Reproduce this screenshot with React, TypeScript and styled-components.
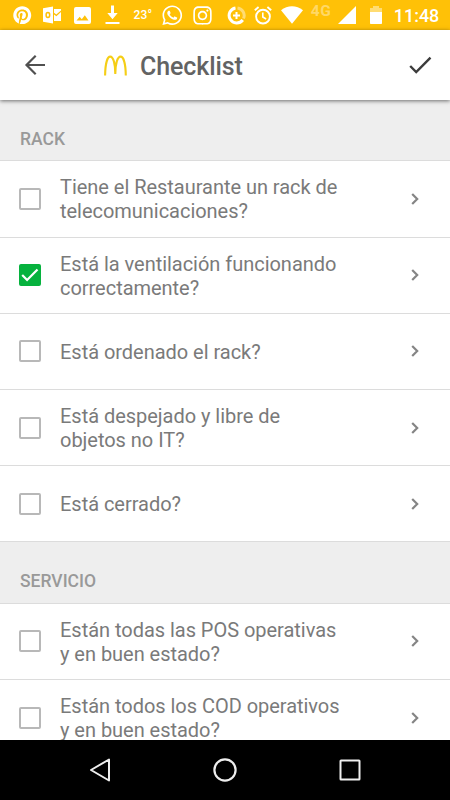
import React from 'react';
import styled, { createGlobalStyle } from 'styled-components';
import { FaInstagram, FaPinterest, FaWhatsapp } from 'react-icons/fa';

const GlobalStyle = createGlobalStyle`
  * { box-sizing: border-box; }
  body { margin: 0; background: #fff; font-family: Roboto, "Liberation Sans", sans-serif; }
  svg { display: block; flex-shrink: 0; }
`;

const Screen = styled.div`
  display: flex;
  flex-direction: column;
  width: 450px;
  height: 800px;
  overflow: hidden;
  background: #fff;
`;

const StatusBar = styled.header`
  display: flex;
  align-items: center;
  flex: 0 0 30px;
  background: #ffc107;
  color: #fff;
`;

const StatusSlot = styled.span<{ $gap: number; $width: number }>`
  display: flex;
  align-items: center;
  justify-content: center;
  flex: 0 0 ${(p) => p.$width}px;
  min-width: 0;
  height: 30px;
  margin-left: ${(p) => p.$gap}px;
  white-space: nowrap;
`;

const Temperature = styled.span`
  font-size: 12px;
  font-weight: 500;
  letter-spacing: 0.2px;
`;

const Network = styled.span`
  font-size: 15.5px;
  font-weight: 700;
  letter-spacing: 0.6px;
  line-height: 22px;
  height: 30px;
  color: #ffd866;
`;

const Clock = styled.span`
  font-size: 18px;
  font-weight: 500;
  line-height: 30px;
  padding-top: 1px;
`;

const AppBar = styled.div`
  display: flex;
  align-items: center;
  flex: 0 0 70px;
  padding: 0 16px 0 21px;
  background: #fff;
  box-shadow: 0 1px 4px rgba(0, 0, 0, 0.55);
  position: relative;
  z-index: 1;
`;

const IconButton = styled.button`
  display: flex;
  padding: 0;
  border: 0;
  background: none;
`;

const Title = styled.h1`
  display: flex;
  align-items: center;
  flex: 1;
  gap: 13px;
  margin: 0 0 0 53px;
  color: #636363;
  font-size: 25px;
  font-weight: 500;
  line-height: 30px;
  letter-spacing: -0.1px;
`;

const TitleText = styled.span`
  padding-top: 3px;
`;

const List = styled.main`
  flex: 1;
  min-height: 0;
  overflow: hidden;
`;

const SectionHeader = styled.h2`
  height: 61.4px;
  margin: 0;
  padding: 29px 20px 0;
  border-bottom: 1px solid #dcdcdc;
  background: #eee;
  color: #999;
  font-size: 17.5px;
  font-weight: 500;
  line-height: 21px;
`;

const Row = styled.div`
  display: flex;
  align-items: center;
  height: 76.2px;
  padding: 0 26px 0 19px;
  border-bottom: 1px solid #dcdcdc;
  background: #fff;
`;

const CheckBox = styled.span<{ $checked?: boolean }>`
  display: flex;
  align-items: center;
  justify-content: center;
  flex: 0 0 22px;
  height: 22px;
  border: 2px solid ${(p) => (p.$checked ? '#06b23e' : '#b8b8b8')};
  border-radius: 2px;
  background: ${(p) => (p.$checked ? '#06b23e' : '#fff')};
`;

const Question = styled.span`
  flex: 1;
  margin-left: 19px;
  padding-top: 1px;
  color: #7a7a7a;
  font-size: 20px;
  line-height: 24px;
  letter-spacing: -0.03px;
  white-space: pre-line;
`;

const NavBar = styled.nav`
  display: flex;
  align-items: center;
  flex: 0 0 60px;
  padding: 0 88px;
  justify-content: space-between;
  background: #000;
`;

const sections = [
  {
    title: 'RACK',
    items: [
      { text: 'Tiene el Restaurante un rack de\ntelecomunicaciones?' },
      { text: 'Está la ventilación funcionando\ncorrectamente?', checked: true },
      { text: 'Está ordenado el rack?' },
      { text: 'Está despejado y libre de\nobjetos no IT?' },
      { text: 'Está cerrado?' },
    ],
  },
  {
    title: 'SERVICIO',
    items: [
      { text: 'Están todas las POS operativas\ny en buen estado?' },
      { text: 'Están todos los COD operativos\ny en buen estado?' },
    ],
  },
];

const OutlookIcon = () => (
  <svg width="18" height="18" viewBox="0 0 18 18">
    <path d="M0 2.2 10 .5v17L0 15.8z" fill="#fff" />
    <ellipse cx="4.9" cy="9.1" rx="1.8" ry="2.5" fill="none" stroke="#ffc107" strokeWidth="1.5" />
    <path d="M11 3h7v1.4l-4.7 4.2L11 6.8zM11 8.4l2.4 1.8L18 6v9h-7z" fill="#fff" />
  </svg>
);

const ImageIcon = () => (
  <svg width="17" height="17" viewBox="0 0 17 17">
    <path
      fillRule="evenodd"
      fill="#fff"
      d="M2 0h13a2 2 0 0 1 2 2v13a2 2 0 0 1-2 2H2a2 2 0 0 1-2-2V2a2 2 0 0 1 2-2zM2.5 13.5h12L10.8 8.3l-3 4-2.1-2.5z"
    />
  </svg>
);

const DownloadIcon = () => (
  <svg width="15" height="20" viewBox="0 0 15 20">
    <path d="M6 .5h3V8h3.7l-5.2 6.2L2.3 8H6zM.5 17h14v2H.5z" fill="#fff" />
  </svg>
);

const DataSaverIcon = () => (
  <svg width="19" height="19" viewBox="0 0 19 19" fill="none">
    <path d="M10.5 1.9A7.6 7.6 0 0 1 16.5 12.5" stroke="#ffdc72" strokeWidth="3" />
    <path d="M8.5 1.9A7.6 7.6 0 1 0 15.8 14" stroke="#fff" strokeWidth="3" />
    <path d="M9.5 6v7M6 9.5h7" stroke="#fff" strokeWidth="2" />
  </svg>
);

const AlarmIcon = () => (
  <svg width="18" height="19" viewBox="0 0 18 19" fill="none" stroke="#fff">
    <circle cx="9" cy="10.6" r="6.9" strokeWidth="1.9" />
    <path d="M.8 4.2 4.6 1M17.2 4.2 13.4 1" strokeWidth="1.9" />
    <path d="M8.8 6.5V11l3.3 2" strokeWidth="1.6" />
  </svg>
);

const WifiIcon = () => (
  <svg width="22" height="18" viewBox="0 0 22 18">
    <path d="M0 4.2C6.5-1.2 15.5-1.2 22 4.2L11 17.7z" fill="#fff" />
  </svg>
);

const SignalIcon = () => (
  <svg width="18" height="18" viewBox="0 0 18 18">
    <path d="M18 0v18H0z" fill="#fff" />
  </svg>
);

const BatteryIcon = () => (
  <svg width="12" height="18" viewBox="0 0 12 18">
    <path d="M0 2h3V0h6v2h3v4H0z" fill="#ffdc72" />
    <path d="M0 6h12v11.2a.8.8 0 0 1-.8.8H.8a.8.8 0 0 1-.8-.8z" fill="#fff" />
  </svg>
);

const BackIcon = () => (
  <svg width="30" height="30" viewBox="0 0 30 30" fill="none" stroke="#505050" strokeWidth="2.2">
    <path d="M24 15H6M14.7 5.8 5.5 15l9.2 9.2" />
  </svg>
);

const ArchesIcon = () => (
  <svg width="23" height="21" viewBox="0 0 23 21" fill="none" stroke="#f5ce16" strokeWidth="2.1">
    <path d="M1.1 20.5C1.3 9 3.3 1.6 6.2 1.6c3.1 0 5.1 7 5.1 17.4C11.3 8.6 13.5 1.6 16.6 1.6c3 0 5 7.4 5.2 18.9" />
  </svg>
);

const DoneIcon = () => (
  <svg width="28" height="28" viewBox="0 0 28 28" fill="none" stroke="#3c3c3c" strokeWidth="2.4">
    <path d="m4.2 15 6 6L24.5 6.7" />
  </svg>
);

const TickIcon = () => (
  <svg width="18" height="18" viewBox="0 0 18 18" fill="none" stroke="#fff" strokeWidth="2.2">
    <path d="m1.2 9 4.9 5L16.5 3.4" />
  </svg>
);

const ChevronIcon = () => (
  <svg width="18" height="18" viewBox="0 0 18 18" fill="none" stroke="#858585" strokeWidth="2.2">
    <path d="m6.2 4 5 5-5 5" />
  </svg>
);

export default function App() {
  return (
    <>
      <GlobalStyle />
      <Screen>
        <StatusBar>
          <StatusSlot $gap={13} $width={19}><FaPinterest size={18.5} /></StatusSlot>
          <StatusSlot $gap={11} $width={18}><OutlookIcon /></StatusSlot>
          <StatusSlot $gap={13} $width={17}><ImageIcon /></StatusSlot>
          <StatusSlot $gap={14} $width={15}><DownloadIcon /></StatusSlot>
          <StatusSlot $gap={13} $width={20}><Temperature>23°</Temperature></StatusSlot>
          <StatusSlot $gap={9} $width={20}><FaWhatsapp size={22.5} /></StatusSlot>
          <StatusSlot $gap={11} $width={19}><FaInstagram size={21} /></StatusSlot>
          <StatusSlot $gap={15} $width={19}><DataSaverIcon /></StatusSlot>
          <StatusSlot $gap={8} $width={18}><AlarmIcon /></StatusSlot>
          <StatusSlot $gap={9} $width={22}><WifiIcon /></StatusSlot>
          <StatusSlot $gap={8} $width={20}><Network>4G</Network></StatusSlot>
          <StatusSlot $gap={7} $width={18}><SignalIcon /></StatusSlot>
          <StatusSlot $gap={14} $width={12}><BatteryIcon /></StatusSlot>
          <StatusSlot $gap={12} $width={45}><Clock>11:48</Clock></StatusSlot>
        </StatusBar>
        <AppBar>
          <IconButton aria-label="Atrás"><BackIcon /></IconButton>
          <Title><ArchesIcon /><TitleText>Checklist</TitleText></Title>
          <IconButton aria-label="Guardar"><DoneIcon /></IconButton>
        </AppBar>
        <List>
          {sections.map((section) => (
            <section key={section.title}>
              <SectionHeader>{section.title}</SectionHeader>
              {section.items.map((item) => (
                <Row key={item.text}>
                  <CheckBox $checked={item.checked}>{item.checked && <TickIcon />}</CheckBox>
                  <Question>{item.text}</Question>
                  <ChevronIcon />
                </Row>
              ))}
            </section>
          ))}
        </List>
        <NavBar>
          <svg width="24" height="24" viewBox="0 0 24 24" fill="none" stroke="#eee" strokeWidth="2" strokeLinejoin="round">
            <path d="M21 1.500v21L3 12z" />
          </svg>
          <svg width="24" height="24" viewBox="0 0 24 24" fill="none" stroke="#eee" strokeWidth="2.2">
            <circle cx="12" cy="12" r="10.600" />
          </svg>
          <svg width="24" height="24" viewBox="0 0 24 24" fill="none" stroke="#eee" strokeWidth="2">
            <rect x="2.500" y="2.500" width="19" height="19" rx="0.500" />
          </svg>
        </NavBar>
      </Screen>
    </>
  );
}
